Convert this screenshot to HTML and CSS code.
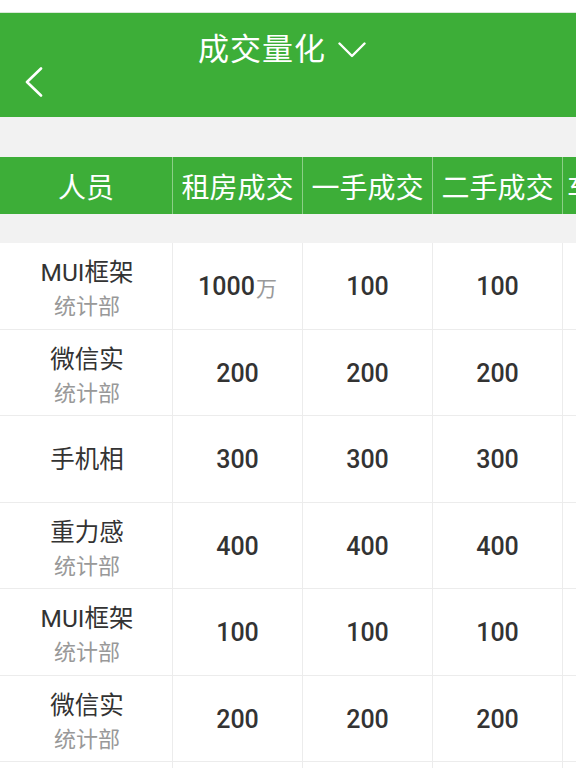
FILE: index.html
```html
<!DOCTYPE html>
<html lang="zh">
<head>
<meta charset="utf-8">
<link rel="stylesheet" href="styles.css">
</head>
<body>
<div class="page">
  <div class="statusbar"></div>
  <header class="navbar">
    <div class="title-row">
      <span class="title">成交量化</span>
      <svg class="caret" width="28" height="16" viewBox="0 0 28 16"><polyline points="1.5,1.5 14,14 26.5,1.5" fill="none" stroke="#fff" stroke-width="2.4" stroke-linecap="round" stroke-linejoin="round"/></svg>
    </div>
    <div class="back-row">
      <svg class="back" width="18" height="30" viewBox="0 0 18 30"><polyline points="16,1.5 2,15 16,28.5" fill="none" stroke="#fff" stroke-width="2.6" stroke-linecap="round" stroke-linejoin="round"/></svg>
    </div>
  </header>
  <div class="band band-top"></div>
  <div class="table">
    <div class="thead">
      <div class="th">人员</div>
      <div class="th">租房成交</div>
      <div class="th">一手成交</div>
      <div class="th">二手成交</div>
      <div class="th">车位成交</div>
    </div>
    <div class="band band-mid"></div>
    <div class="tbody">
      <div class="tr">
        <div class="td person"><span class="name">MUI框架</span><span class="dept">统计部</span></div>
        <div class="td num">1000<span class="unit">万</span></div>
        <div class="td num">100</div>
        <div class="td num">100</div>
        <div class="td num"></div>
      </div>
      <div class="tr">
        <div class="td person"><span class="name">微信实</span><span class="dept">统计部</span></div>
        <div class="td num">200</div>
        <div class="td num">200</div>
        <div class="td num">200</div>
        <div class="td num"></div>
      </div>
      <div class="tr">
        <div class="td person single"><span class="name">手机相</span></div>
        <div class="td num">300</div>
        <div class="td num">300</div>
        <div class="td num">300</div>
        <div class="td num"></div>
      </div>
      <div class="tr">
        <div class="td person"><span class="name">重力感</span><span class="dept">统计部</span></div>
        <div class="td num">400</div>
        <div class="td num">400</div>
        <div class="td num">400</div>
        <div class="td num"></div>
      </div>
      <div class="tr">
        <div class="td person"><span class="name">MUI框架</span><span class="dept">统计部</span></div>
        <div class="td num">100</div>
        <div class="td num">100</div>
        <div class="td num">100</div>
        <div class="td num"></div>
      </div>
      <div class="tr">
        <div class="td person"><span class="name">微信实</span><span class="dept">统计部</span></div>
        <div class="td num">200</div>
        <div class="td num">200</div>
        <div class="td num">200</div>
        <div class="td num"></div>
      </div>
      <div class="tr">
        <div class="td person"></div>
        <div class="td num"></div>
        <div class="td num"></div>
        <div class="td num"></div>
        <div class="td num"></div>
      </div>
    </div>
  </div>
</div>
</body>
</html>
```
FILE: styles.css
```css
* { box-sizing: border-box; }
html, body { margin: 0; padding: 0; background: #fff; }
body {
  font-family: Roboto, "Noto Sans CJK SC", "Noto Sans", sans-serif;
  color: #333;
}
.page {
  width: 576px;
  height: 768px;
  overflow: hidden;
}
.statusbar {
  height: 13px;
  background: #fff;
  border-bottom: 1px solid #d9e9d8;
}
.navbar {
  height: 104px;
  background: #3dae38;
  color: #fff;
  display: flex;
  flex-direction: column;
}
.title-row {
  display: flex;
  align-items: center;
  padding-left: 198px;
  padding-top: 16px;
  height: 57px;
}
.title {
  font-size: 31px;
  line-height: 40px;
  letter-spacing: 1px;
}
.caret {
  margin-left: 12px;
  margin-top: 0px;
}
.back-row {
  padding-left: 25px;
  margin-top: -3px;
  display: flex;
}
.band { background: #f2f2f2; }
.band-top { height: 40px; }
.band-mid { height: 29px; }
.table {
  width: 692px;
}
.thead {
  display: grid;
  grid-template-columns: 172px 130px 130px 130px 130px;
  height: 57px;
  background: #3dae38;
  color: #fff;
}
.th {
  display: flex;
  align-items: center;
  justify-content: center;
  font-size: 28px;
  white-space: nowrap;
  overflow: hidden;
}
.th + .th { border-left: 1px solid #8ccf87; }
.th:last-child { justify-content: flex-start; padding-left: 4px; }
.tr {
  display: grid;
  grid-template-columns: 172px 130px 130px 130px 130px;
  height: 86.5px;
  border-bottom: 1px solid #ececec;
}
.td {
  display: flex;
  align-items: center;
  justify-content: center;
}
.td + .td { border-left: 1px solid #ececec; }
.person {
  flex-direction: column;
  padding-left: 2px;
  padding-top: 9px;
}
.person.single { padding-top: 2px; }
.name {
  font-size: 24.5px;
  line-height: 34px;
  color: #333;
}
.dept {
  font-size: 22px;
  line-height: 34px;
  color: #999;
}
.num {
  font-size: 25px;
  font-weight: 500;
  color: #333;
  padding-top: 2px;
}
.unit {
  font-size: 21px;
  font-weight: 400;
  color: #999;
  margin-left: 1px;
}
```
